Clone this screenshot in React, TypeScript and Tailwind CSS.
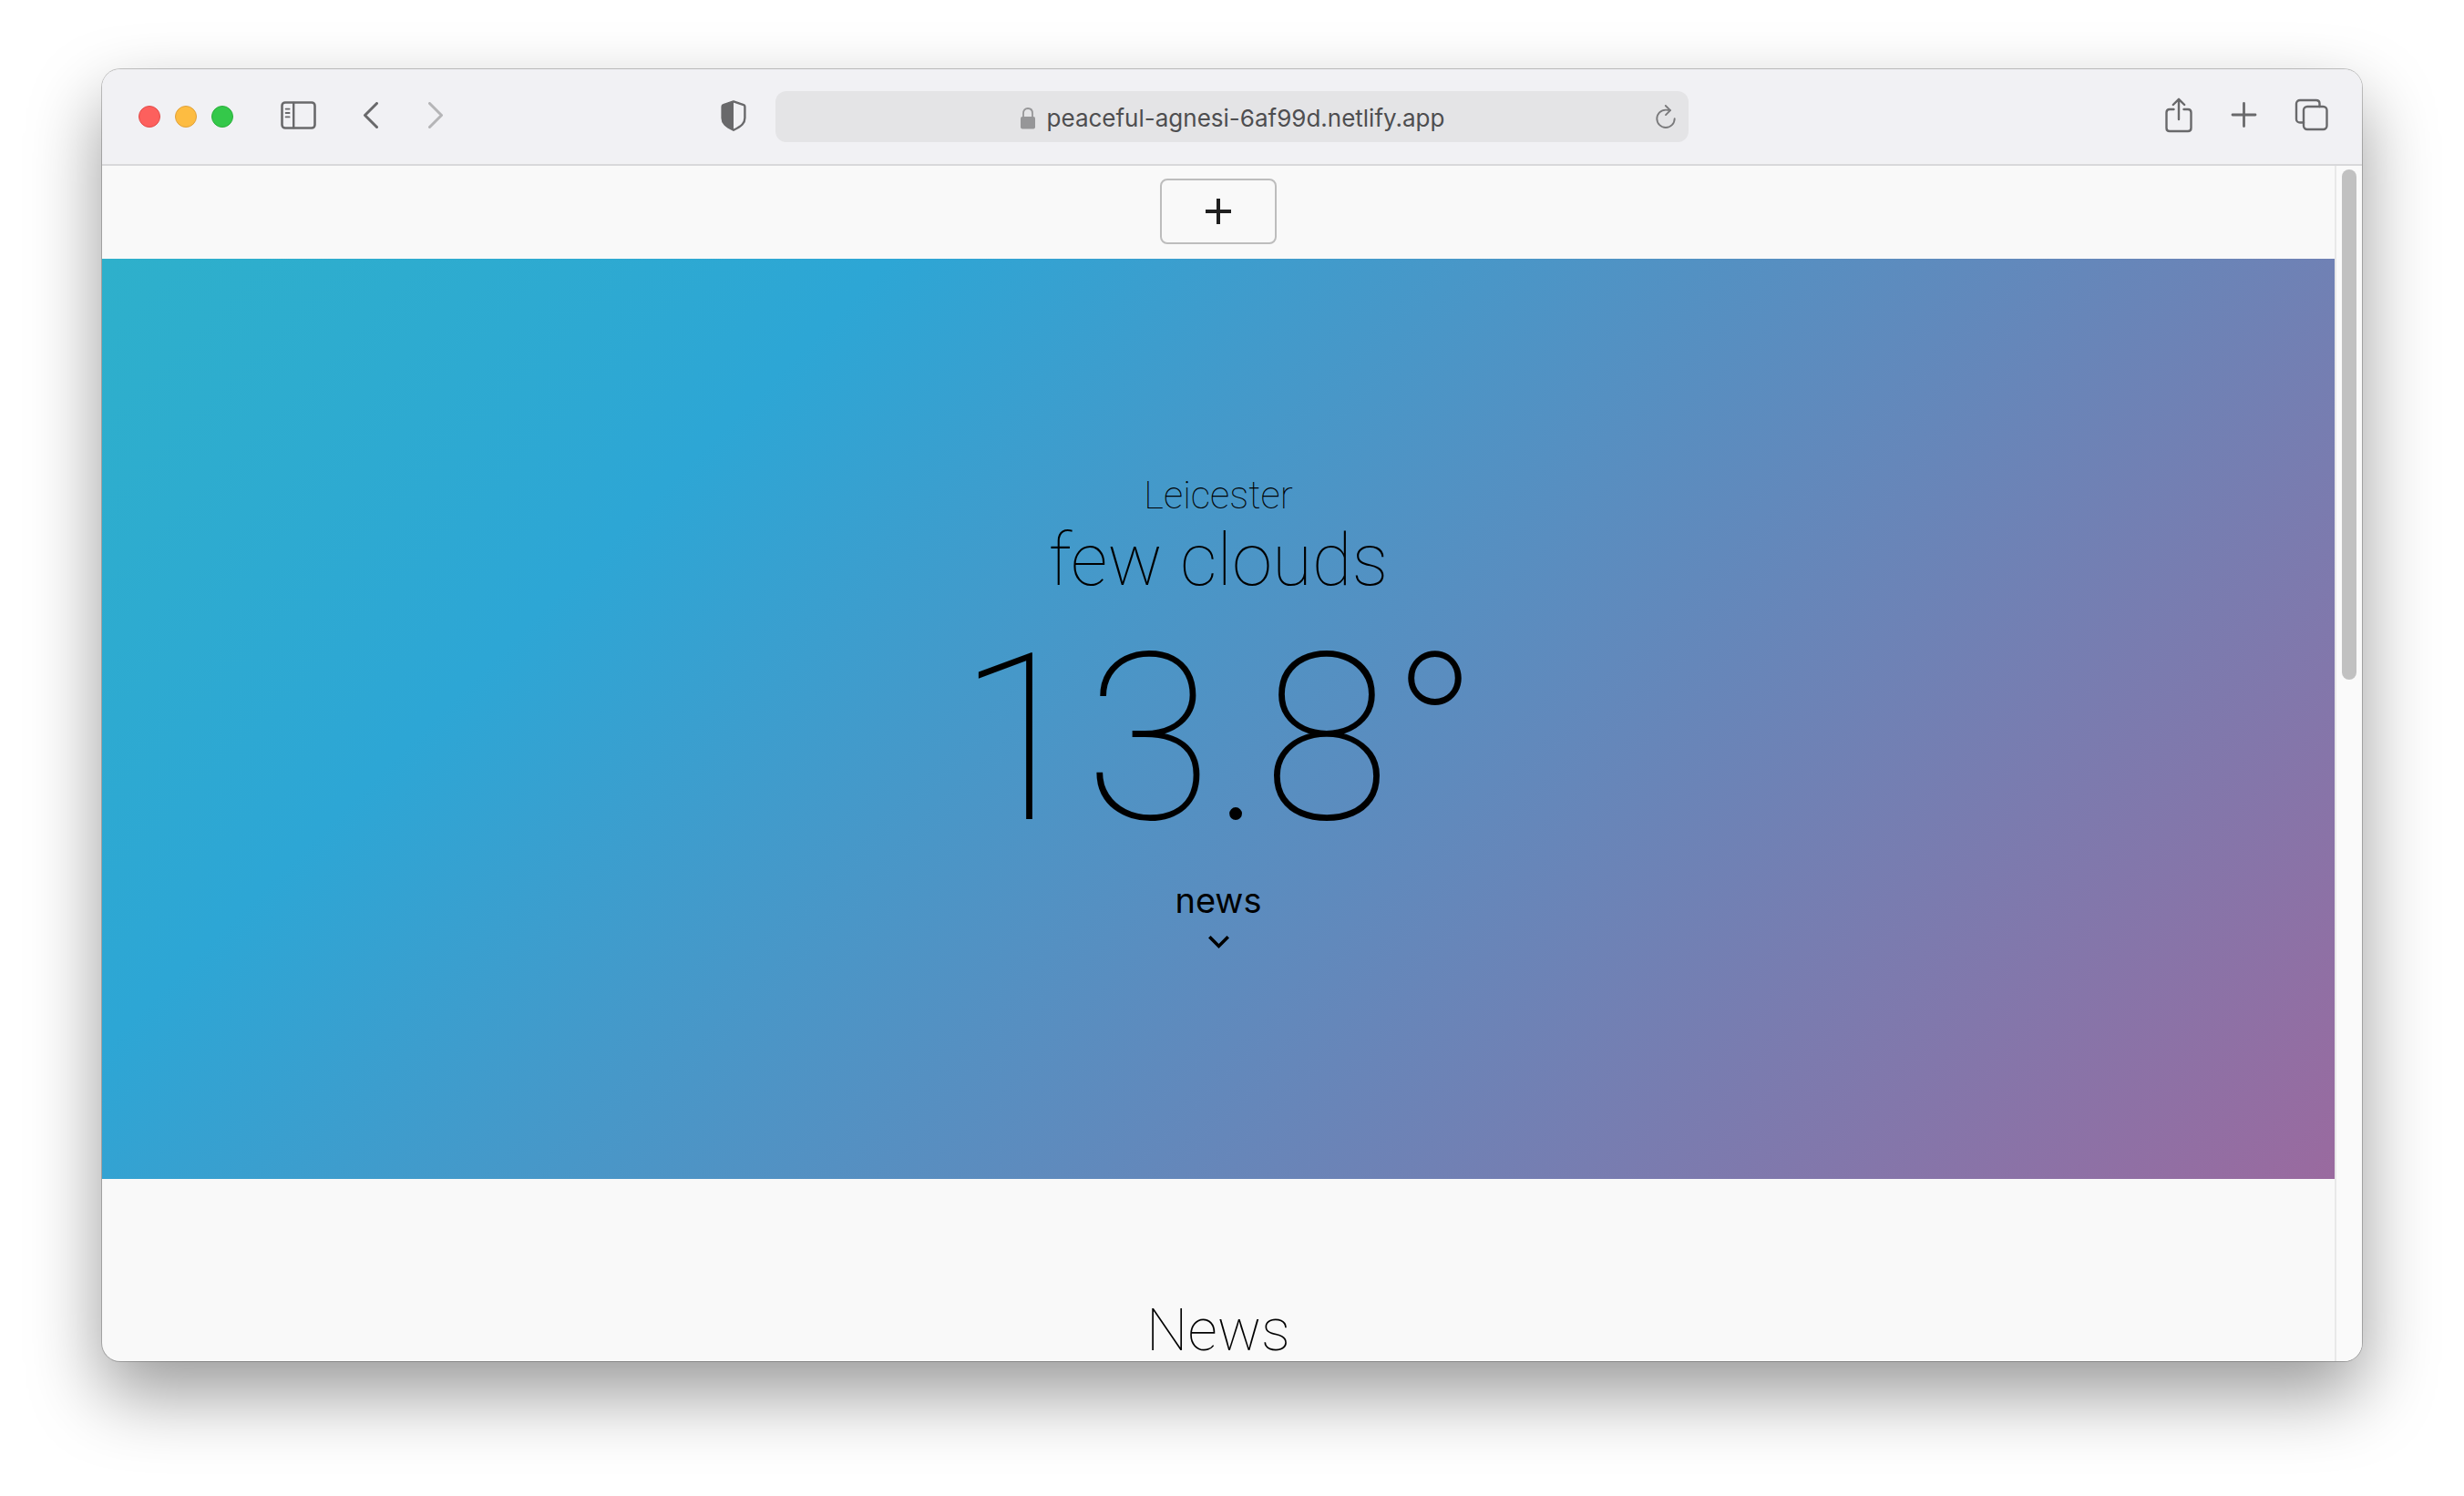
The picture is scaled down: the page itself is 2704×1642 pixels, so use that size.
import type { ReactNode } from "react";

function IconButton({ label, children, className = "" }: { label: string; children: ReactNode; className?: string }) {
  return (
    <button type="button" aria-label={label} className={`flex shrink-0 items-center justify-center ${className}`}>
      {children}
    </button>
  );
}

function Toolbar() {
  return (
    <header className="grid h-[106px] shrink-0 grid-cols-[1fr_minmax(0,1002px)_1fr] items-center border-b-2 border-[#d8d8da] bg-[#f1f1f4] text-[#69696b]">
      <div className="flex items-center pl-10 pr-8">
        <div className="flex gap-4">
          <button type="button" aria-label="Close" className="size-6 rounded-full border border-[#e24b48] bg-[#fd605d]" />
          <button type="button" aria-label="Minimise" className="size-6 rounded-full border border-[#e0a13a] bg-[#fdbc41]" />
          <button type="button" aria-label="Zoom" className="size-6 rounded-full border border-[#2aae3a] bg-[#34c84a]" />
        </div>
        <div className="flex flex-1 items-center pb-0.5">
          <IconButton label="Show sidebar" className="ml-[52px]">
            <svg width="40" height="32" viewBox="0 0 40 32" fill="none" stroke="currentColor" strokeLinecap="round">
              <rect x="1.5" y="1.5" width="36" height="28" rx="3.5" strokeWidth="2.6" />
              <path d="M14.2 2v27" strokeWidth="2.4" />
              <path d="M5.6 8.6h4M5.6 13h4M5.6 17.4h4" strokeWidth="1.8" />
            </svg>
          </IconButton>
          <IconButton label="Back" className="ml-[50px]">
            <svg width="18" height="30" viewBox="0 0 18 30" fill="none" stroke="currentColor" strokeWidth="3" strokeLinecap="round" strokeLinejoin="round">
              <path d="M15.5 1.5 2.5 14.5l13 13" />
            </svg>
          </IconButton>
          <IconButton label="Forward" className="ml-[54px] text-[#b5b5b7]">
            <svg width="18" height="30" viewBox="0 0 18 30" fill="none" stroke="currentColor" strokeWidth="3" strokeLinecap="round" strokeLinejoin="round">
              <path d="m1.5 1.5 13 13-13 13" />
            </svg>
          </IconButton>
          <IconButton label="Privacy report" className="ml-auto">
            <svg width="28" height="34" viewBox="0 0 28 34" fill="none">
              <path d="M14 1.4 25 5.2c.9.3 1.4.9 1.4 1.8v12.5c0 5.5-3.2 8.7-12.4 13.3C4.800 28.2 1.6 25 1.6 19.5V7c0-.9.5-1.5 1.4-1.800L14 1.4Z" stroke="currentColor" strokeWidth="2.4" strokeLinejoin="round" />
              <path d="M14 1.4v31.4C4.800 28.2 1.6 25 1.6 19.5V7c0-.9.5-1.5 1.4-1.800L14 1.4Z" fill="currentColor" />
            </svg>
          </IconButton>
        </div>
      </div>

      <div className="flex h-14 items-center rounded-xl bg-[#e4e4e6] px-[11px]">
        <span className="w-7" />
        <div className="flex flex-1 items-center justify-center gap-3 pt-1">
          <svg width="18" height="26" viewBox="0 0 18 26" fill="none" className="text-[#969698]">
            <rect x="1" y="11" width="16" height="13.5" rx="2" fill="currentColor" />
            <path d="M4 12V7.5C4 4 6 2 9 2s5 2 5 5.500V12" stroke="currentColor" strokeWidth="1.8" />
          </svg>
          <span className="text-[26px] leading-8 text-[#4e4e50]">peaceful-agnesi-6af99d.netlify.app</span>
        </div>
        <IconButton label="Reload" className="w-7">
          <svg width="24" height="28" viewBox="0 0 24 28" fill="none" stroke="#7a7a7c" strokeWidth="1.9" strokeLinecap="round" strokeLinejoin="round">
            <path d="M21.7 16.3a9.7 9.7 0 1 1-9.7-9.7c1.9 0 3.4.1 4.900.5" />
            <path d="M11.8 2 17 7.100l-5 5" />
          </svg>
        </IconButton>
      </div>

      <div className="flex items-center justify-end gap-10 pb-1 pr-9">
        <IconButton label="Share">
          <svg width="30" height="40" viewBox="1 0 30 40" fill="none" stroke="currentColor" strokeWidth="2.4" strokeLinecap="round" strokeLinejoin="round">
            <path d="M10.5 14H6c-2 0-3.500 1.5-3.500 3.500v17C2.500 36.5 4 38 6 38h20c2 0 3.500-1.500 3.500-3.500v-17c0-2-1.500-3.500-3.500-3.500h-4.500" />
            <path d="M16 25V3M9.800 9 16 2.800 22.200 9" />
          </svg>
        </IconButton>
        <IconButton label="New tab">
          <svg width="32" height="32" viewBox="0 0 32 32" fill="none" stroke="currentColor" strokeWidth="2.8" strokeLinecap="round">
            <path d="M16.500 3.500v25M4 16h25" />
          </svg>
        </IconButton>
        <IconButton label="Show tab overview">
          <svg width="38" height="36" viewBox="0 0 38 36" fill="none" stroke="currentColor" strokeWidth="2.4" strokeLinecap="round" strokeLinejoin="round">
            <rect x="10" y="9" width="25.500" height="25" rx="4" />
            <path d="M10 26.500H6c-2.200 0-4-1.600-4-3.800V5.800C2 3.600 3.800 2 6 2h17.700c2.200 0 3.800 1.600 3.800 3.800V9" />
          </svg>
        </IconButton>
      </div>
    </header>
  );
}

function Weather() {
  return (
    <section className="flex h-[1010px] shrink-0 flex-col items-center bg-[linear-gradient(135deg,#2eb0cb_0%,#2da6d5_25%,#6388bb_62%,#9a6a9f_100%)] pt-[234px] text-center text-black">
      <h2 className="font-[Roboto] text-[42px] font-thin leading-[52px]">Leicester</h2>
      <p className="font-[Roboto] text-[80px] font-thin leading-[90px]">few clouds</p>
      <p className="font-[Roboto] text-[256px] font-thin leading-[304px]">13.8°</p>
      <a href="#news" className="flex flex-col items-center text-[38px] leading-[48px]">
        news
        <svg width="28" height="28" viewBox="0 0 28 28" fill="none" stroke="currentColor" strokeWidth="3.6" className="mt-3">
          <path d="m4.300 4.300 10.200 10.200L24.700 4.300" />
        </svg>
      </a>
    </section>
  );
}

export default function App() {
  return (
    <div className="flex h-screen flex-col bg-white px-28 pb-[148px] pt-[76px] font-[Inter,sans-serif]">
      <div className="flex min-h-0 flex-1 flex-col overflow-hidden rounded-[20px] bg-[#f9f9f9] shadow-[0_0_0_1px_rgba(0,0,0,0.22),0_36px_80px_rgba(0,0,0,0.4)]">
        <Toolbar />
        <div className="flex min-h-0 flex-1">
          <main className="flex min-w-0 flex-1 flex-col overflow-hidden">
            <div className="flex shrink-0 justify-center pb-4 pt-[14px]">
              <button type="button" aria-label="Add location" className="flex h-[72px] w-32 items-center justify-center rounded-lg border-2 border-[#bdbdbd] text-[#1f1f1f]">
                <svg width="28" height="28" viewBox="0 0 28 28" stroke="currentColor" strokeWidth="4">
                  <path d="M14 0v28M0 14h28" />
                </svg>
              </button>
            </div>
            <Weather />
            <section id="news" className="pt-[135px] text-center">
              <h2 className="font-[Roboto] text-[64px] font-thin leading-[64px] text-black">News</h2>
            </section>
          </main>
          <div className="w-[30px] shrink-0 border-l-2 border-[#e8e8e8] bg-[#fafafa] px-[6px] pt-1">
            <div className="h-[560px] rounded-full bg-[#c1c1c1]" />
          </div>
        </div>
      </div>
    </div>
  );
}
